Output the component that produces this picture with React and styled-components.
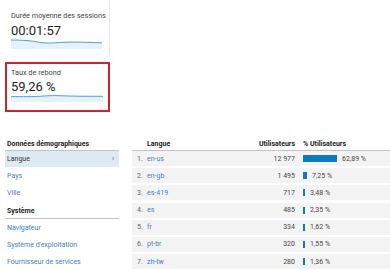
import React from 'react'
import styled, { createGlobalStyle } from 'styled-components'

const GlobalStyle = createGlobalStyle`
  html, body {
    margin: 0;
    padding: 0;
    background: #ffffff;
    font-family: Roboto, "Liberation Sans", Arial, sans-serif;
    color: #333333;
  }
`

const Page = styled.div`
  width: 390px;
  height: 270px;
  overflow: hidden;
  display: flex;
  flex-direction: column;
`

const Metrics = styled.div`
  display: flex;
  flex-direction: column;
  gap: 7px;
  padding-left: 5px;
  width: 105px;
`

const MetricCard = styled.div`
  box-sizing: border-box;
  display: flex;
  flex-direction: column;
  width: 105px;
  height: ${({ $boxed }) => ($boxed ? '50px' : '55px')};
  padding: ${({ $boxed }) => ($boxed ? '4px 4px 0 4px' : '11px 0 0 6px')};
  border: ${({ $boxed }) => ($boxed ? '2px solid #cf2230' : 'none')};
  border-right: ${({ $boxed }) => ($boxed ? '2px solid #cf2230' : '1px solid #e6e6e6')};
`

const MetricLabel = styled.div`
  font-size: 7.3px;
  line-height: 9px;
  white-space: nowrap;
  color: #444444;
`

const MetricValue = styled.div`
  font-size: 13px;
  line-height: 15px;
  color: #222222;
  margin-top: ${({ $boxed }) => ($boxed ? '2px' : '3px')};
`

const Spark = styled.svg`
  display: block;
  width: ${({ $w }) => $w}px;
  height: ${({ $h }) => $h}px;
`

const Bottom = styled.div`
  display: flex;
  gap: 13px;
  padding-left: 5px;
  margin-top: 27px;
`

const Nav = styled.div`
  width: 114px;
  display: flex;
  flex-direction: column;
`

const NavHeading = styled.div`
  font-size: 7px;
  font-weight: 700;
  color: #222222;
  height: ${({ $first }) => ($first ? '11px' : '17px')};
  line-height: ${({ $first }) => ($first ? '11px' : '20px')};
  padding-left: 2px;
  border-bottom: 1px solid #c4c4c4;
`

const NavItem = styled.div`
  display: flex;
  align-items: center;
  justify-content: space-between;
  height: ${({ $active }) => ($active ? '16px' : '17px')};
  padding: 0 5px 0 2px;
  font-size: 7px;
  color: ${({ $active }) => ($active ? '#333333' : '#3b82c4')};
  background: ${({ $active }) => ($active ? '#dde9f3' : 'transparent')};
`

const Chevron = styled.span`
  font-size: 7px;
  color: #555555;
`

const Table = styled.div`
  flex: 1;
  display: flex;
  flex-direction: column;
  gap: 2.2px;
`

const HeadRow = styled.div`
  display: grid;
  grid-template-columns: 15px 103px 45px 1fr;
  height: 11px;
  line-height: 11px;
  font-size: 7px;
  font-weight: 700;
  color: #222222;
  border-bottom: 1px solid #c4c4c4;
  margin-bottom: -2.2px;
`

const Row = styled.div`
  display: grid;
  grid-template-columns: 15px 103px 45px 1fr;
  align-items: center;
  height: 15px;
  font-size: 7px;
  background: #f3f3f3;
`

const Rank = styled.span`
  padding-left: 5px;
  color: #666666;
`

const Link = styled.span`
  color: #3b82c4;
`

const Num = styled.span`
  text-align: right;
  color: #444444;
`

const PctCell = styled.span`
  display: flex;
  align-items: center;
  gap: 5px;
  padding-left: 8px;
  color: ${({ $head }) => ($head ? '#222222' : '#444444')};
`

const Bar = styled.span`
  display: block;
  height: 7px;
  background: #0d7bc0;
`

const rows = [
  ['en-us', '12 977', 62.89, '62,89 %'],
  ['en-gb', '1 495', 7.25, '7,25 %'],
  ['es-419', '717', 3.48, '3,48 %'],
  ['es', '485', 2.35, '2,35 %'],
  ['fr', '334', 1.62, '1,62 %'],
  ['pt-br', '320', 1.55, '1,55 %'],
  ['zh-tw', '280', 1.36, '1,36 %'],
]

const Sparkline = ({ line, w, h }) => (
  <Spark $w={w} $h={h} viewBox={`0 0 ${w} ${h}`} preserveAspectRatio="none">
    <path d={`${line} L${w},${h} L0,${h} Z`} fill="#e6f1fa" />
    <path d={line} fill="none" stroke="#4aa3d6" strokeWidth="1" />
  </Spark>
)

export default function App() {
  return (
    <Page>
      <GlobalStyle />
      <Metrics>
        <MetricCard>
          <MetricLabel>Durée moyenne des sessions</MetricLabel>
          <MetricValue>00:01:57</MetricValue>
          <Sparkline
            w={91}
            h={11}
            line="M0,2 C10,2 20,2.4 30,4.6 C38,5.6 46,4.6 56,4.2 C66,3.8 80,4.6 91,4.8"
          />
        </MetricCard>
        <MetricCard $boxed>
          <MetricLabel>Taux de rebond</MetricLabel>
          <MetricValue $boxed>59,26 %</MetricValue>
          <Sparkline
            w={92}
            h={8}
            line="M0,2.6 C12,2.6 22,2.8 30,2.2 C38,1.4 48,1.6 58,2 C70,2.4 82,2.2 92,2.3"
          />
        </MetricCard>
      </Metrics>
      <Bottom>
        <Nav>
          <NavHeading $first>Données démographiques</NavHeading>
          <NavItem $active>
            Langue
            <Chevron>›</Chevron>
          </NavItem>
          <NavItem>Pays</NavItem>
          <NavItem>Ville</NavItem>
          <NavHeading>Système</NavHeading>
          <NavItem>Navigateur</NavItem>
          <NavItem>Système d'exploitation</NavItem>
          <NavItem>Fournisseur de services</NavItem>
        </Nav>
        <Table>
          <HeadRow>
            <span />
            <span>Langue</span>
            <Num as="span" style={{ color: '#222222' }}>Utilisateurs</Num>
            <PctCell $head>% Utilisateurs</PctCell>
          </HeadRow>
          {rows.map(([lang, users, pct, label], i) => (
            <Row key={lang}>
              <Rank>{i + 1}.</Rank>
              <Link>{lang}</Link>
              <Num>{users}</Num>
              <PctCell>
                <Bar style={{ width: Math.max(2, Math.round(pct * 0.54)) }} />
                {label}
              </PctCell>
            </Row>
          ))}
        </Table>
      </Bottom>
    </Page>
  )
}
